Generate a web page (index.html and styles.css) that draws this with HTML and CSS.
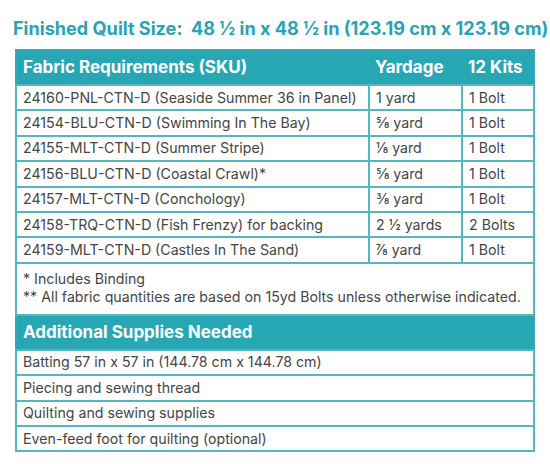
FILE: index.html
```html
<!DOCTYPE html>
<html>
<head>
<meta charset="utf-8">
<link rel="stylesheet" href="styles.css">
</head>
<body>
<div class="page">
  <h1 class="title">Finished Quilt Size:&nbsp; 48 ½ in x 48 ½ in (123.19 cm x 123.19 cm)</h1>
  <table class="req">
    <colgroup><col class="c1"><col class="c2"><col class="c3"></colgroup>
    <thead>
      <tr class="head"><th>Fabric Requirements (SKU)</th><th>Yardage</th><th>12 Kits</th></tr>
    </thead>
    <tbody>
      <tr><td>24160-PNL-CTN-D (Seaside Summer 36 in Panel)</td><td>1 yard</td><td>1 Bolt</td></tr>
      <tr><td>24154-BLU-CTN-D (Swimming In The Bay)</td><td>⅝ yard</td><td>1 Bolt</td></tr>
      <tr><td>24155-MLT-CTN-D (Summer Stripe)</td><td>⅛ yard</td><td>1 Bolt</td></tr>
      <tr><td>24156-BLU-CTN-D (Coastal Crawl)*</td><td>⅝ yard</td><td>1 Bolt</td></tr>
      <tr><td>24157-MLT-CTN-D (Conchology)</td><td>⅜ yard</td><td>1 Bolt</td></tr>
      <tr><td>24158-TRQ-CTN-D (Fish Frenzy) for backing</td><td>2 ½ yards</td><td>2 Bolts</td></tr>
      <tr><td>24159-MLT-CTN-D (Castles In The Sand)</td><td>⅞ yard</td><td>1 Bolt</td></tr>
      <tr><td colspan="3" class="notes">* Includes Binding<br>** All fabric quantities are based on 15yd Bolts unless otherwise indicated.</td></tr>
      <tr class="head"><th colspan="3">Additional Supplies Needed</th></tr>
      <tr><td colspan="3">Batting 57 in x 57 in (144.78 cm x 144.78 cm)</td></tr>
      <tr><td colspan="3">Piecing and sewing thread</td></tr>
      <tr><td colspan="3">Quilting and sewing supplies</td></tr>
      <tr><td colspan="3">Even-feed foot for quilting (optional)</td></tr>
    </tbody>
  </table>
</div>
</body>
</html>
```

FILE: styles.css
```css
html, body {
  margin: 0;
  padding: 0;
  background: #ffffff;
}
.page {
  width: 550px;
  padding: 17px 0 0 15px;
  box-sizing: border-box;
  font-family: Inter, "Noto Sans", sans-serif;
}
.title {
  margin: 0 0 10px -2px;
  font-size: 18.1px;
  line-height: 22px;
  font-weight: 700;
  color: #2aa3b2;
  white-space: nowrap;
}
.req {
  width: 518px;
  border-collapse: collapse;
  border: 2px solid #34a9b4;
  table-layout: fixed;
}
.c1 { width: 353px; }
.c2 { width: 93px; }
.c3 { width: 72px; }
.req th {
  background: #27a7b4;
  color: #ffffff;
  font-weight: 700;
  font-size: 17px;
  line-height: 21px;
  text-align: left;
  padding: 6px 5px 6px 6px;
}
.req td {
  border: 2px solid #54b7c0;
  color: #454545;
  font-size: 14.2px;
  line-height: 18.4px;
  padding: 2.5px 6px 2.5px 6px;
  text-align: left;
}
.req .notes {
  padding: 6px 6px 8px 6px;
  line-height: 18px;
}
```
